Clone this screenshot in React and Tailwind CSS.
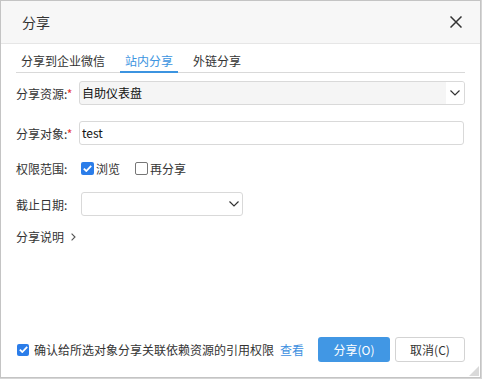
import { useState } from "react";

const FONT = { fontFamily: '"Noto Sans CJK SC", "Noto Sans", sans-serif' };

function Chevron({ className = "" }) {
  return (
    <svg width="10" height="6" viewBox="0 0 10 6" className={className}>
      <path d="M0.5 0.5 L5 5 L9.5 0.5" fill="none" stroke="#333" strokeWidth="1.2" />
    </svg>
  );
}

function Check({ checked, size = 13 }) {
  if (checked) {
    return (
      <span
        className="flex items-center justify-center rounded-[2px] bg-[#2b7de9] shrink-0"
        style={{ width: size, height: size }}
      >
        <svg width="9" height="7" viewBox="0 0 9 7">
          <path d="M0.8 3.6 L3.3 6 L8.2 0.9" fill="none" stroke="#fff" strokeWidth="1.8" />
        </svg>
      </span>
    );
  }
  return (
    <span
      className="rounded-[2px] border border-[#767676] bg-white shrink-0"
      style={{ width: size, height: size }}
    />
  );
}

function Label({ text, required }) {
  return (
    <div className="w-[63px] shrink-0 text-[12px] leading-[17px] text-[#333]">
      {text}
      {required && <span className="text-[#e53935]">*</span>}
    </div>
  );
}

export default function App() {
  const [tab] = useState(1);
  const tabs = ["分享到企业微信", "站内分享", "外链分享"];

  return (
    <div className="w-[482px] h-[379px] bg-[#d6d6d6]" style={FONT}>
      <div className="relative w-[481px] h-[378px] border border-[#c4c4c4] bg-white flex flex-col">
        <div className="h-[43px] shrink-0 bg-[#f7f7f7] border-b border-[#e6e6e6] flex items-center justify-between pl-[21px] pr-[18px]">
          <span className="text-[14px] text-[#333]">分享</span>
          <svg width="12" height="12" viewBox="0 0 12 12">
            <path d="M0.5 0.5 L11.5 11.5 M11.5 0.5 L0.5 11.5" stroke="#333" strokeWidth="1.5" />
          </svg>
        </div>

        <div className="px-[15px] flex flex-col flex-1">
          <div className="flex gap-[10px] border-b border-[#d9d9d9]">
            {tabs.map((t, i) => (
              <div
                key={t}
                className={
                  "px-[5px] pt-[8px] pb-[2px] text-[12px] leading-[17px] -mb-px border-b-2 " +
                  (i === tab ? "border-[#3c94e0] text-[#3c94e0]" : "border-transparent text-[#333]")
                }
              >
                {t}
              </div>
            ))}
          </div>

          <div className="flex items-center mt-[8px]">
            <Label text="分享资源:" required />
            <div className="flex-1 h-[24px] flex items-center rounded-[3px] border border-[#d9d9d9] bg-[#f5f5f5] overflow-hidden">
              <span className="flex-1 pl-[2px] text-[12px] text-[#111]">自助仪表盘</span>
              <span className="w-[18px] h-full bg-white flex items-center justify-center">
                <Chevron />
              </span>
            </div>
          </div>

          <div className="flex items-center mt-[16px]">
            <Label text="分享对象:" required />
            <div className="flex-1 h-[24px] mr-[1px] flex items-center rounded-[3px] border border-[#d9d9d9] bg-white pl-[2px] text-[12px] text-[#111]">
              test
            </div>
          </div>

          <div className="flex items-center mt-[15px] h-[17px]">
            <Label text="权限范围:" />
            <div className="flex items-center ml-[2px]">
              <Check checked />
              <span className="ml-[2px] text-[12px] text-[#333]">浏览</span>
              <span className="ml-[15px]" />
              <Check />
              <span className="ml-[2px] text-[12px] text-[#333]">再分享</span>
            </div>
          </div>

          <div className="flex items-center mt-[15px]">
            <Label text="截止日期:" />
            <div className="ml-[2px] w-[162px] h-[24px] flex items-center justify-end pr-[3px] rounded-[3px] border border-[#d9d9d9] bg-white">
              <Chevron />
            </div>
          </div>

          <div className="flex items-center mt-[12px] text-[12px] leading-[17px] text-[#333]">
            分享说明
            <svg width="5" height="8" viewBox="0 0 5 8" className="ml-[7px]">
              <path d="M0.6 0.6 L4 4 L0.6 7.4" fill="none" stroke="#555" strokeWidth="1.1" />
            </svg>
          </div>

          <div className="mt-auto mb-[15px] flex items-center">
            <span className="ml-[1px]">
              <Check checked size={12} />
            </span>
            <span className="ml-[5px] text-[12px] text-[#333]">确认给所选对象分享关联依赖资源的引用权限</span>
            <span className="ml-[6px] text-[12px] text-[#3d8fe0]">查看</span>
            <div className="ml-auto flex gap-[5px]">
              <button className="w-[72px] h-[25px] rounded-[3px] bg-[#4197e4] text-white text-[12px]">
                分享(O)
              </button>
              <button className="w-[70px] h-[25px] rounded-[3px] border border-[#d3d3d3] bg-white text-[#333] text-[12px]">
                取消(C)
              </button>
            </div>
          </div>
        </div>

        <svg width="10" height="10" viewBox="0 0 10 10" className="absolute right-[1px] bottom-[1px]">
          <path d="M10 0 L10 10 L0 10 Z" fill="#d9d9d9" />
        </svg>
      </div>
    </div>
  );
}
